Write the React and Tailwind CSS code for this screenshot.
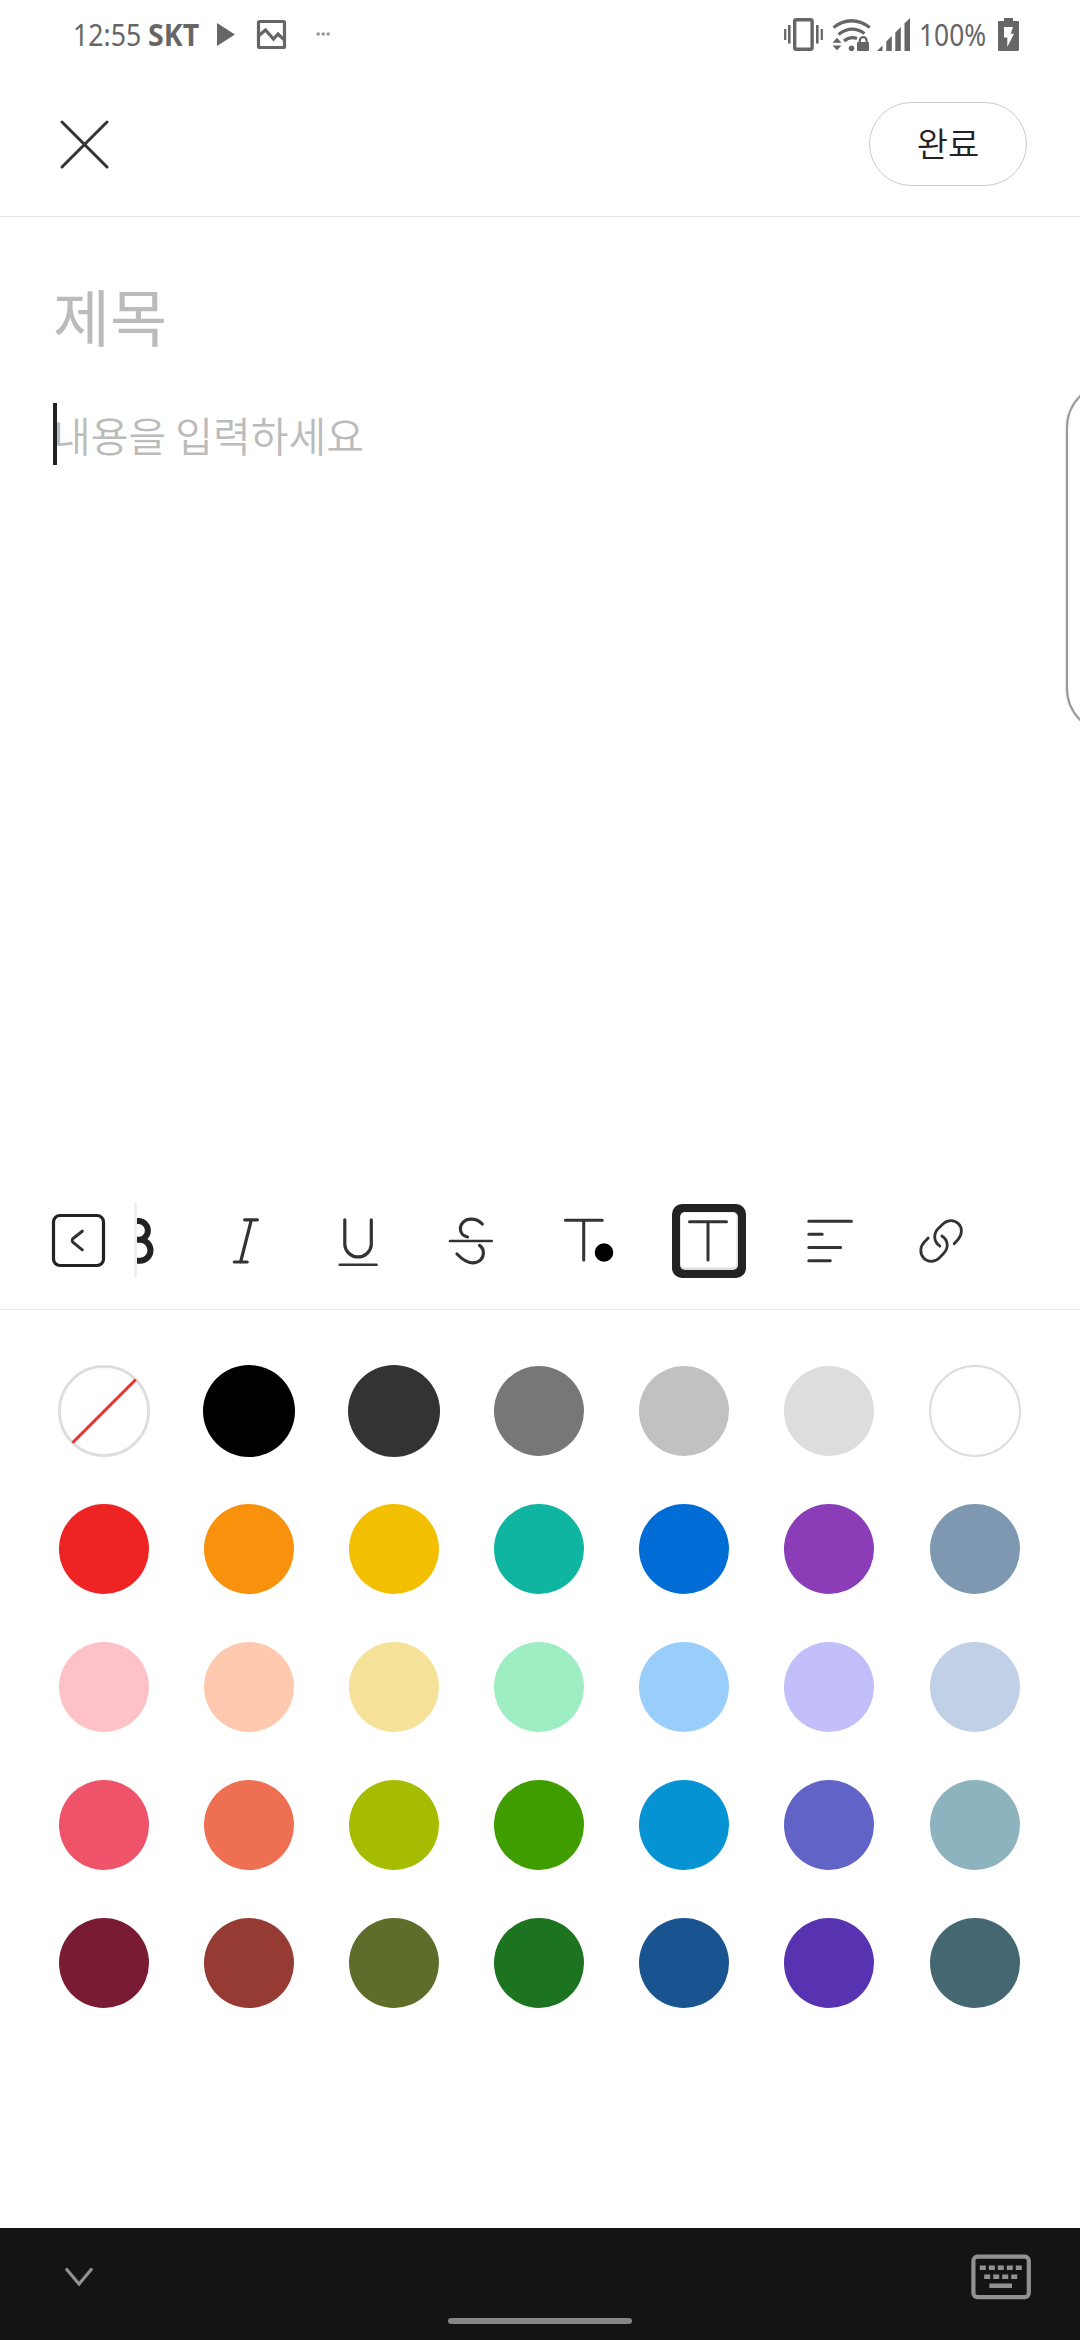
import { useState } from "react";

const SWATCHES = [
  ["none", "#000000", "#333333", "#777777", "#c1c1c1", "#dddddd", "#ffffff"],
  ["#ee2323", "#f8910b", "#f2c000", "#0fb5a1", "#006dd7", "#8a3db6", "#7e98b1"],
  ["#ffc1c8", "#ffc9af", "#f6e199", "#9feec3", "#99cefa", "#c1bef9", "#c0d1e7"],
  ["#ef5369", "#ef6f53", "#a6bc00", "#409d00", "#0593d3", "#6164c6", "#8cb3be"],
  ["#781b33", "#953b34", "#5e6e2a", "#1c7320", "#1a5490", "#5733b1", "#456771"],
];

// x / w place the viewBox inside the 80px high toolbar strip
function ToolIcon({ x, w, label, children, className = "" }) {
  return (
    <button aria-label={label} className={`block shrink-0 ${className}`}>
      <svg
        width={w}
        height="80"
        viewBox={`${x} 0 ${w} 80`}
        fill="none"
        stroke="#333"
        strokeWidth="3.2"
        strokeLinecap="round"
      >
        {children}
      </svg>
    </button>
  );
}

function StatusBar() {
  return (
    <div className="flex h-[70px] shrink-0 items-start justify-between pl-[73px] pr-[60px] text-[#666]">
      <div className="flex">
        <span className="mt-4 block w-[75px] origin-left scale-x-[0.86] whitespace-nowrap text-[31px] leading-[36px] font-['Noto_Sans']">
          12:55
        </span>
        <span className="mt-4 block w-[69px] origin-left scale-x-[0.92] whitespace-nowrap text-[31px] leading-[36px] font-bold font-['Noto_Sans']">
          SKT
        </span>
        <svg width="120" height="70" viewBox="217 0 120 70" fill="none">
          <path d="M217 23L235 34.4 217 46z" fill="#666" />
          <rect x="258.5" y="21.5" width="26" height="26" rx="1" stroke="#666" strokeWidth="3.2" />
          <path d="M259 35.5L265.5 30 273.5 39 278 34 285 40.5" stroke="#666" strokeWidth="3.2" />
          <g fill="#999">
            <circle cx="318.2" cy="34" r="1.8" />
            <circle cx="323.2" cy="34" r="1.8" />
            <circle cx="328.2" cy="34" r="1.8" />
          </g>
        </svg>
      </div>
      <div className="flex">
        <svg width="135" height="70" viewBox="784 0 135 70" fill="none" stroke="#666">
          {/* vibrate */}
          <rect x="794.7" y="19.7" width="17.4" height="29.6" rx="1.6" strokeWidth="3.4" />
          <path d="M789.3 25V43.5M817.3 25V43.5" strokeWidth="2.6" />
          <path d="M785.2 29V40M821.8 29V40" strokeWidth="2.2" />
          {/* wifi */}
          <path d="M833.5 27.5Q851.5 14 869.8 27.5" strokeWidth="3.2" />
          <path d="M838.5 34.5Q851.5 24.5 864.5 33.5" strokeWidth="3.2" />
          <path d="M844 41Q850 36 857 38.5" strokeWidth="3.2" />
          <g fill="#666" stroke="none">
            <circle cx="851.5" cy="48.3" r="2.8" />
            <path d="M832.5 42.7L837 37.7 841.5 42.7zM832.5 45.5H841.5L837 50.3z" />
            <rect x="857" y="42" width="12" height="9" rx="1" />
          </g>
          <path d="M859.8 42.5V40.5a3.4 3.4 0 0 1 6.8 0V42.5" strokeWidth="2.2" />
          {/* signal */}
          <g fill="#666" stroke="none">
            <path d="M877 51L882.5 45.5V51z" />
            <path d="M886.3 51V41.5L891.8 36V51z" />
            <path d="M895.3 51V32.5L900.8 27V51z" />
            <path d="M904.5 51V23.5L910 18V51z" />
          </g>
        </svg>
        <span className="mt-4 block w-[79px] origin-left scale-x-[0.85] whitespace-nowrap text-[31px] leading-[36px] font-['Noto_Sans']">
          100%
        </span>
        <svg width="22" height="70" viewBox="998 0 22 70">
          <path
            d="M1004 18H1013V21H1018Q1019 21 1019 22V49.5Q1019 51 1017.5 51H999.5Q998 51 998 49.5V22Q998 21 999 21H1004z"
            fill="#666"
          />
          <path d="M1004 27H1013L1010.7 33.7H1014L1007.3 47V37.5H1004z" fill="#fff" />
        </svg>
      </div>
    </div>
  );
}

function Swatch({ color }) {
  if (color === "none") {
    return (
      <svg width="92" height="92" viewBox="0 0 92 92" fill="none">
        <circle cx="46" cy="46" r="44.6" stroke="#ddd" strokeWidth="2.8" />
        <path d="M14.5 77.7L77.8 14.5" stroke="#ee2f2f" strokeWidth="3" />
      </svg>
    );
  }
  if (color === "#ffffff") {
    return <div className="size-[92px] rounded-full border-2 border-[#ddd] bg-white" />;
  }
  const big = color === "#000000" || color === "#333333";
  return (
    <div
      className={big ? "size-[92px] rounded-full" : "size-[90px] rounded-full"}
      style={{ backgroundColor: color }}
    />
  );
}

function Toolbar() {
  return (
    <div className="flex h-[110px] shrink-0 items-start border-b border-[#e5e5e5]">
      <ToolIcon x={48} w={86} label="collapse" className="ml-12">
        <rect x="53.5" y="15.5" width="50" height="50" rx="6.5" stroke="#222" strokeWidth="3.2" />
        <path d="M82.3 31.2L73.4 38.2Q71 40.4 73.4 42.6L82.3 49.8" strokeWidth="3" />
      </ToolIcon>
      <div className="mt-[3px] h-[74px] w-[3px] shrink-0 bg-[#efefef]" />
      <ToolIcon x={137} w={20} label="bold">
        <path
          d="M130 21H138.5a9.3 9.3 0 0 1 0 18.8H130M138 39.8H140a10.5 10.5 0 0 1 0 21H130"
          stroke="#222"
          strokeWidth="6"
        />
      </ToolIcon>
      <ToolIcon x={228} w={36} label="italic" className="ml-[71px]">
        <path d="M244.6 19.8H257.4M234.3 62H247.2M251.3 20L240.6 62" />
      </ToolIcon>
      <ToolIcon x={336} w={44} label="underline" className="ml-[72px]">
        <path d="M344.8 19.8V44.8a13.3 13.3 0 0 0 26.5 0V19.8" />
        <path d="M339.7 64.7H376.6" strokeWidth="2.4" />
      </ToolIcon>
      <ToolIcon x={446} w={50} label="strikethrough" className="ml-[66px]">
        <path d="M482.3 24C479 20.5 475 19.2 471 19.2C464.5 19.2 460.4 23.8 460.4 28.8C460.4 33.2 463.3 36.3 467.5 37" />
        <path d="M479.5 45.4C482.2 47.2 483.4 49.8 483.4 53C483.4 58.8 479 62.8 472.5 62.8C466.5 62.8 461.5 58.7 457 54" />
        <path d="M450 41H491.7" strokeWidth="2.6" />
      </ToolIcon>
      <ToolIcon x={560} w={58} label="text color" className="ml-16">
        <path d="M565.3 20.2H602.3M583.7 20.2V60" strokeWidth="3" />
        <circle cx="604" cy="52.5" r="9.3" fill="#000" stroke="none" />
      </ToolIcon>
      <ToolIcon x={670} w={78} label="background color" className="ml-[52px]">
        <rect x="672" y="4" width="74" height="74" rx="10" fill="#222" stroke="none" />
        <rect x="680" y="12" width="58" height="58" rx="5" fill="#ddd" stroke="none" />
        <rect x="680.8" y="12.6" width="55.6" height="55" rx="4" fill="#fff" stroke="none" />
        <path d="M689.5 21.7H726.5M708 21.7V60" strokeWidth="3" />
      </ToolIcon>
      <ToolIcon x={804} w={52} label="align" className="ml-14">
        <path d="M808.8 21.3H851.4M808.8 34.3H822.2M808.8 47.5H840.6M808.8 60.7H830.3" strokeWidth="3" />
      </ToolIcon>
      <ToolIcon x={916} w={50} label="link" className="ml-[60px]">
        <path
          d="M954.2 43.7L958 39.5C962.3 34.5 962.5 27.8 958.5 23.8C954.3 19.5 947.8 19.7 943.5 23.5L938.5 28.3C933.3 33.5 933.2 41.5 939.9 46.2"
          strokeWidth="2.8"
        />
        <path
          d="M928.2 38L924.2 42.2C919.8 46.8 919.7 54 923.8 58.2C928 62.4 934.5 62.2 939 58.2L943.5 53.5C948.7 48 948.7 40.5 941.9 36"
          strokeWidth="2.8"
        />
      </ToolIcon>
    </div>
  );
}

function BottomBar() {
  return (
    <div className="flex h-28 shrink-0 flex-col bg-[#141414]">
      <div className="flex h-[90px] items-start justify-between pl-[62px] pr-12">
        <svg className="mt-[34px]" width="34" height="30" viewBox="62 2262 34 30" fill="none">
          <path d="M66.8 2269.5L79 2284 91.2 2269.5" stroke="#919191" strokeWidth="3.2" strokeLinecap="round" />
        </svg>
        <svg className="mt-[24px]" width="62" height="50" viewBox="970 2252 62 50" fill="#919191">
          <rect x="973.4" y="2256.7" width="55.4" height="40.4" rx="4" fill="none" stroke="#919191" strokeWidth="4.2" />
          {[0, 1, 2, 3, 4].map((i) => (
            <rect key={i} x={979.8 + i * 9} y="2265.5" width="6" height="4.5" />
          ))}
          {[0, 1, 2, 3].map((i) => (
            <rect key={i} x={984.2 + i * 9} y="2274.5" width="6" height="4.5" />
          ))}
          <rect x="989.3" y="2283.5" width="22.7" height="4.5" />
        </svg>
      </div>
      <div className="mx-auto h-1.5 w-[184px] rounded-full bg-[#868686]" />
    </div>
  );
}

function App() {
  const [title, setTitle] = useState("");

  return (
    <div className="relative flex h-[2340px] w-[1080px] flex-col overflow-hidden bg-white font-['Noto_Sans_CJK_KR',sans-serif]">
      <StatusBar />
      <header className="flex h-[147px] shrink-0 items-start justify-between border-b border-[#e5e5e5] pl-[58px] pr-[53px]">
        <button aria-label="close" className="mt-12">
          <svg width="53" height="53" viewBox="0 0 53 53" stroke="#333" strokeWidth="3" strokeLinecap="round">
            <path d="M4 4L49 49M49 4L4 49" />
          </svg>
        </button>
        <button className="mt-8 flex h-[84px] w-[158px] items-center justify-center rounded-full border border-[#ccc] pb-0.5 text-[34px] leading-none font-[350] text-[#222]">
          완료
        </button>
      </header>

      <main className="flex h-[983px] shrink-0 flex-col items-start pl-[53px]">
        <h1 className="mt-[53px] h-[91px] text-[62px] leading-[90px] text-[#bbb]">
          {title || "제목"}
        </h1>
        <div className="mt-[42px] flex h-[62px]">
          <span className="relative z-10 h-[62px] w-1 bg-[#222]" />
          <p className="-ml-1 whitespace-nowrap text-[41px] leading-[62px] font-[350] text-[#bbb]">
            내용을 입력하세요
          </p>
        </div>
      </main>

      <Toolbar />

      <section className="grid h-[918px] shrink-0 auto-rows-[138px] grid-cols-[repeat(6,145px)_147px] content-start pl-[31.5px] pt-8">
        {SWATCHES.flat().map((color) => (
          <div key={color} className="flex items-center justify-center">
            <Swatch color={color} />
          </div>
        ))}
      </section>

      <BottomBar />

      {/* edge panel handle */}
      <div className="absolute top-[382px] left-[1066px] h-[352px] w-[120px] rounded-[46px] border-2 border-[#999] bg-white shadow-[0_0_2px_#bbb]" />
    </div>
  );
}

export default App;
